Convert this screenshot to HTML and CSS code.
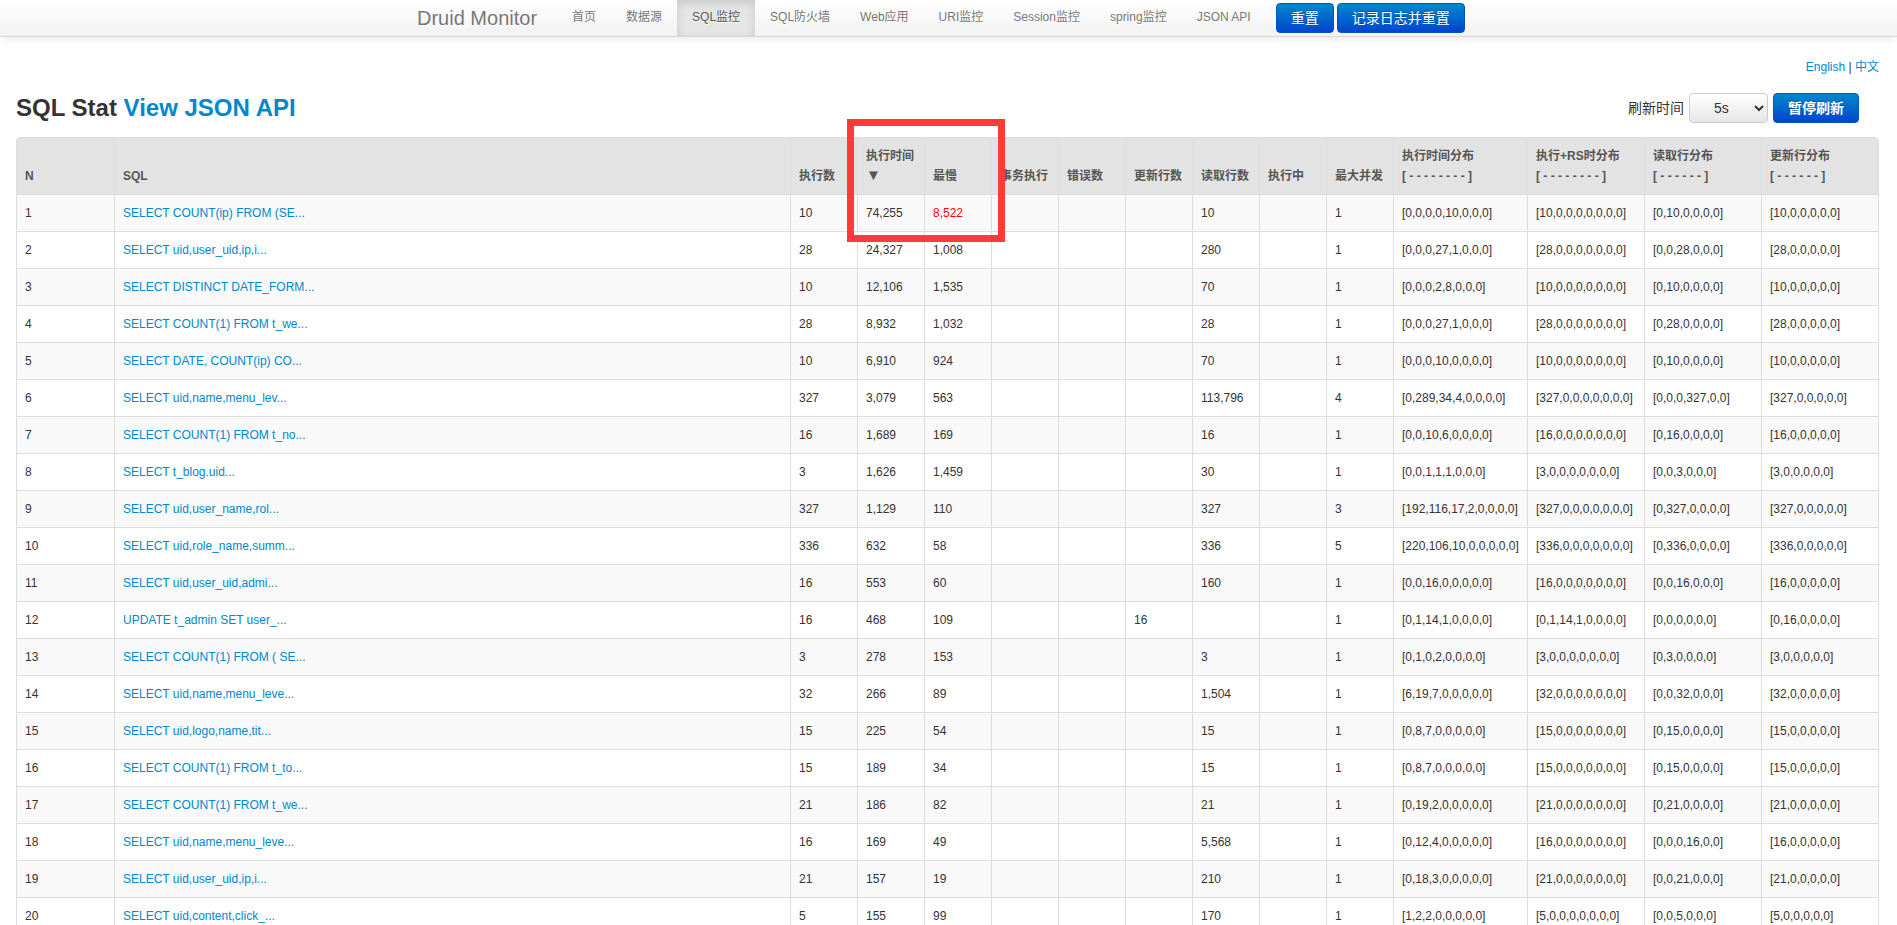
FILE: index.html
```html
<!DOCTYPE html>
<html lang="zh">
<head>
<meta charset="utf-8">
<title>Druid Stat Index</title>
<link rel="stylesheet" href="styles.css">
</head>
<body>

<div class="navbar">
  <a class="brand" href="#">Druid Monitor</a>
  <ul class="nav">
    <li><a href="#">首页</a></li>
    <li><a href="#">数据源</a></li>
    <li class="active"><a href="#">SQL监控</a></li>
    <li><a href="#">SQL防火墙</a></li>
    <li><a href="#">Web应用</a></li>
    <li><a href="#">URI监控</a></li>
    <li><a href="#">Session监控</a></li>
    <li><a href="#">spring监控</a></li>
    <li><a href="#">JSON API</a></li>
  </ul>
  <div class="nav-btns">
    <a class="btn" href="#">重置</a>
    <a class="btn" href="#">记录日志并重置</a>
  </div>
</div>

<div class="container">
  <div class="lang"><a href="#">English</a> | <a href="#">中文</a></div>

  <div class="title-row">
    <h3>SQL Stat <a href="#">View JSON API</a></h3>
    <div class="refresh">
      <span>刷新时间</span>
      <select class="refresh-select">
        <option>5s</option>
        <option>10s</option>
        <option>20s</option>
        <option>30s</option>
      </select>
      <a class="btn btn-bold" href="#">暂停刷新</a>
    </div>
  </div>

  <table class="stat">
    <colgroup>
      <col class="c-n"><col class="c-sql">
      <col class="c-num"><col class="c-num"><col class="c-num"><col class="c-num"><col class="c-num">
      <col class="c-num"><col class="c-num"><col class="c-num"><col class="c-num">
      <col class="c-wide"><col class="c-dist"><col class="c-dist"><col class="c-dist">
    </colgroup>
    <thead>
      <tr>
        <th>N</th><th>SQL</th><th>执行数</th><th>执行时间<br><span class="sort">▼</span></th><th>最慢</th><th>事务执行</th><th>错误数</th><th>更新行数</th><th>读取行数</th><th>执行中</th><th>最大并发</th>
        <th>执行时间分布<br>[ - - - - - - - - ]</th><th>执行+RS时分布<br>[ - - - - - - - - ]</th><th>读取行分布<br>[ - - - - - - ]</th><th>更新行分布<br>[ - - - - - - ]</th>
      </tr>
    </thead>
    <tbody>
      <tr><td>1</td><td><a href="#">SELECT COUNT(ip) FROM (SE...</a></td><td>10</td><td>74,255</td><td class="slow">8,522</td><td></td><td></td><td></td><td>10</td><td></td><td>1</td><td>[0,0,0,0,10,0,0,0]</td><td>[10,0,0,0,0,0,0,0]</td><td>[0,10,0,0,0,0]</td><td>[10,0,0,0,0,0]</td></tr>
      <tr><td>2</td><td><a href="#">SELECT uid,user_uid,ip,i...</a></td><td>28</td><td>24,327</td><td>1,008</td><td></td><td></td><td></td><td>280</td><td></td><td>1</td><td>[0,0,0,27,1,0,0,0]</td><td>[28,0,0,0,0,0,0,0]</td><td>[0,0,28,0,0,0]</td><td>[28,0,0,0,0,0]</td></tr>
      <tr><td>3</td><td><a href="#">SELECT DISTINCT DATE_FORM...</a></td><td>10</td><td>12,106</td><td>1,535</td><td></td><td></td><td></td><td>70</td><td></td><td>1</td><td>[0,0,0,2,8,0,0,0]</td><td>[10,0,0,0,0,0,0,0]</td><td>[0,10,0,0,0,0]</td><td>[10,0,0,0,0,0]</td></tr>
      <tr><td>4</td><td><a href="#">SELECT COUNT(1) FROM t_we...</a></td><td>28</td><td>8,932</td><td>1,032</td><td></td><td></td><td></td><td>28</td><td></td><td>1</td><td>[0,0,0,27,1,0,0,0]</td><td>[28,0,0,0,0,0,0,0]</td><td>[0,28,0,0,0,0]</td><td>[28,0,0,0,0,0]</td></tr>
      <tr><td>5</td><td><a href="#">SELECT DATE, COUNT(ip) CO...</a></td><td>10</td><td>6,910</td><td>924</td><td></td><td></td><td></td><td>70</td><td></td><td>1</td><td>[0,0,0,10,0,0,0,0]</td><td>[10,0,0,0,0,0,0,0]</td><td>[0,10,0,0,0,0]</td><td>[10,0,0,0,0,0]</td></tr>
      <tr><td>6</td><td><a href="#">SELECT uid,name,menu_lev...</a></td><td>327</td><td>3,079</td><td>563</td><td></td><td></td><td></td><td>113,796</td><td></td><td>4</td><td>[0,289,34,4,0,0,0,0]</td><td>[327,0,0,0,0,0,0,0]</td><td>[0,0,0,327,0,0]</td><td>[327,0,0,0,0,0]</td></tr>
      <tr><td>7</td><td><a href="#">SELECT COUNT(1) FROM t_no...</a></td><td>16</td><td>1,689</td><td>169</td><td></td><td></td><td></td><td>16</td><td></td><td>1</td><td>[0,0,10,6,0,0,0,0]</td><td>[16,0,0,0,0,0,0,0]</td><td>[0,16,0,0,0,0]</td><td>[16,0,0,0,0,0]</td></tr>
      <tr><td>8</td><td><a href="#">SELECT t_blog.uid...</a></td><td>3</td><td>1,626</td><td>1,459</td><td></td><td></td><td></td><td>30</td><td></td><td>1</td><td>[0,0,1,1,1,0,0,0]</td><td>[3,0,0,0,0,0,0,0]</td><td>[0,0,3,0,0,0]</td><td>[3,0,0,0,0,0]</td></tr>
      <tr><td>9</td><td><a href="#">SELECT uid,user_name,rol...</a></td><td>327</td><td>1,129</td><td>110</td><td></td><td></td><td></td><td>327</td><td></td><td>3</td><td>[192,116,17,2,0,0,0,0]</td><td>[327,0,0,0,0,0,0,0]</td><td>[0,327,0,0,0,0]</td><td>[327,0,0,0,0,0]</td></tr>
      <tr><td>10</td><td><a href="#">SELECT uid,role_name,summ...</a></td><td>336</td><td>632</td><td>58</td><td></td><td></td><td></td><td>336</td><td></td><td>5</td><td>[220,106,10,0,0,0,0,0]</td><td>[336,0,0,0,0,0,0,0]</td><td>[0,336,0,0,0,0]</td><td>[336,0,0,0,0,0]</td></tr>
      <tr><td>11</td><td><a href="#">SELECT uid,user_uid,admi...</a></td><td>16</td><td>553</td><td>60</td><td></td><td></td><td></td><td>160</td><td></td><td>1</td><td>[0,0,16,0,0,0,0,0]</td><td>[16,0,0,0,0,0,0,0]</td><td>[0,0,16,0,0,0]</td><td>[16,0,0,0,0,0]</td></tr>
      <tr><td>12</td><td><a href="#">UPDATE t_admin SET user_...</a></td><td>16</td><td>468</td><td>109</td><td></td><td></td><td>16</td><td></td><td></td><td>1</td><td>[0,1,14,1,0,0,0,0]</td><td>[0,1,14,1,0,0,0,0]</td><td>[0,0,0,0,0,0]</td><td>[0,16,0,0,0,0]</td></tr>
      <tr><td>13</td><td><a href="#">SELECT COUNT(1) FROM ( SE...</a></td><td>3</td><td>278</td><td>153</td><td></td><td></td><td></td><td>3</td><td></td><td>1</td><td>[0,1,0,2,0,0,0,0]</td><td>[3,0,0,0,0,0,0,0]</td><td>[0,3,0,0,0,0]</td><td>[3,0,0,0,0,0]</td></tr>
      <tr><td>14</td><td><a href="#">SELECT uid,name,menu_leve...</a></td><td>32</td><td>266</td><td>89</td><td></td><td></td><td></td><td>1,504</td><td></td><td>1</td><td>[6,19,7,0,0,0,0,0]</td><td>[32,0,0,0,0,0,0,0]</td><td>[0,0,32,0,0,0]</td><td>[32,0,0,0,0,0]</td></tr>
      <tr><td>15</td><td><a href="#">SELECT uid,logo,name,tit...</a></td><td>15</td><td>225</td><td>54</td><td></td><td></td><td></td><td>15</td><td></td><td>1</td><td>[0,8,7,0,0,0,0,0]</td><td>[15,0,0,0,0,0,0,0]</td><td>[0,15,0,0,0,0]</td><td>[15,0,0,0,0,0]</td></tr>
      <tr><td>16</td><td><a href="#">SELECT COUNT(1) FROM t_to...</a></td><td>15</td><td>189</td><td>34</td><td></td><td></td><td></td><td>15</td><td></td><td>1</td><td>[0,8,7,0,0,0,0,0]</td><td>[15,0,0,0,0,0,0,0]</td><td>[0,15,0,0,0,0]</td><td>[15,0,0,0,0,0]</td></tr>
      <tr><td>17</td><td><a href="#">SELECT COUNT(1) FROM t_we...</a></td><td>21</td><td>186</td><td>82</td><td></td><td></td><td></td><td>21</td><td></td><td>1</td><td>[0,19,2,0,0,0,0,0]</td><td>[21,0,0,0,0,0,0,0]</td><td>[0,21,0,0,0,0]</td><td>[21,0,0,0,0,0]</td></tr>
      <tr><td>18</td><td><a href="#">SELECT uid,name,menu_leve...</a></td><td>16</td><td>169</td><td>49</td><td></td><td></td><td></td><td>5,568</td><td></td><td>1</td><td>[0,12,4,0,0,0,0,0]</td><td>[16,0,0,0,0,0,0,0]</td><td>[0,0,0,16,0,0]</td><td>[16,0,0,0,0,0]</td></tr>
      <tr><td>19</td><td><a href="#">SELECT uid,user_uid,ip,i...</a></td><td>21</td><td>157</td><td>19</td><td></td><td></td><td></td><td>210</td><td></td><td>1</td><td>[0,18,3,0,0,0,0,0]</td><td>[21,0,0,0,0,0,0,0]</td><td>[0,0,21,0,0,0]</td><td>[21,0,0,0,0,0]</td></tr>
      <tr><td>20</td><td><a href="#">SELECT uid,content,click_...</a></td><td>5</td><td>155</td><td>99</td><td></td><td></td><td></td><td>170</td><td></td><td>1</td><td>[1,2,2,0,0,0,0,0]</td><td>[5,0,0,0,0,0,0,0]</td><td>[0,0,5,0,0,0]</td><td>[5,0,0,0,0,0]</td></tr>
    </tbody>
  </table>
</div>

<!-- red annotation drawn over the table -->
<div class="mark"></div>

</body>
</html>
```

FILE: styles.css
```css
html { overflow: hidden; }

body {
  margin: 0;
  font-family: "Liberation Sans", "Noto Sans CJK SC", sans-serif;
  font-size: 12px;
  line-height: 20px;
  color: #333;
  background: #fff;
}

a { color: #0088cc; text-decoration: none; }

/* top bar */
.navbar {
  display: flex;
  height: 36px;
  padding-left: 397px;
  background: linear-gradient(to bottom, #ffffff, #f2f2f2);
  border-bottom: 1px solid #d9d9d9;
  box-shadow: 0 1px 10px rgba(0, 0, 0, .1);
}
.brand {
  padding: 5px 20px;
  font-size: 20px;
  line-height: 26px;
  color: #777;
  text-shadow: 0 1px 0 #fff;
}
.nav {
  display: flex;
  margin: 0 10px 0 0;
  padding: 0;
  list-style: none;
}
.nav a {
  display: block;
  height: 36px;
  padding: 7px 15px;
  box-sizing: border-box;
  color: #777;
  text-shadow: 0 1px 0 #fff;
}
.nav .active a {
  color: #555;
  background: #e5e5e5;
  box-shadow: inset 0 3px 8px rgba(0, 0, 0, .125);
}
.nav-btns {
  display: flex;
  gap: 3px;
  padding-top: 3px;
}

.btn {
  display: inline-block;
  height: 30px;
  padding: 0 14px;
  box-sizing: border-box;
  font-size: 14px;
  line-height: 28px;
  color: #fff;
  text-shadow: 0 -1px 0 rgba(0, 0, 0, .25);
  background: linear-gradient(to bottom, #0088cc, #0044cc);
  border: 1px solid #0055bb;
  border-radius: 4px;
}
.btn-bold { font-weight: bold; }

/* page body */
.container { padding: 20px 18px 0 16px; }

.lang { text-align: right; }

.title-row {
  display: flex;
  justify-content: space-between;
  align-items: center;
  height: 30px;
  margin-top: 16px;
  margin-bottom: 14px;
  padding-right: 20px;
}
h3 {
  margin: 0;
  font-size: 24px;
  line-height: 30px;
  font-weight: bold;
}
.refresh {
  display: flex;
  align-items: center;
  gap: 5px;
  font-size: 14px;
}
.refresh-select {
  width: 79px;
  height: 30px;
  padding: 0 0 0 20px;
  font-family: inherit;
  font-size: 14px;
  color: #333;
  background: linear-gradient(to bottom, #ffffff, #e6e6e6);
  border: 1px solid #ccc;
  border-radius: 4px;
}

/* stat table */
.stat {
  width: 100%;
  table-layout: fixed;
  border-collapse: separate;
  border-spacing: 0;
  border: 1px solid #ddd;
  border-left: 0;
  border-radius: 4px;
}
.stat .c-n { width: 98px; }
.stat .c-sql { width: 676px; }
.stat .c-num { width: 67px; }
.stat .c-wide { width: 134px; }
.stat .c-dist { width: 117px; }

.stat th, .stat td {
  padding: 8px;
  text-align: left;
  border-left: 1px solid #ddd;
  white-space: nowrap;
  overflow: hidden;
}
.stat th {
  vertical-align: bottom;
  font-weight: bold;
  color: #555;
  background: #e3e3e3;
}
.stat th:first-child { border-top-left-radius: 4px; }
.stat th:last-child { border-top-right-radius: 4px; }
.stat .sort { font-size: 15px; line-height: 1; font-weight: normal; }
.stat td { border-top: 1px solid #ddd; }
.stat tbody tr:nth-child(odd) td { background: #f9f9f9; }
.stat .slow { color: #ff0000; }

/* red box from the annotated screenshot */
.mark {
  position: absolute;
  left: 847px;
  top: 119px;
  width: 158px;
  height: 123px;
  box-sizing: border-box;
  border: 7px solid #ff3a3a;
}
```
